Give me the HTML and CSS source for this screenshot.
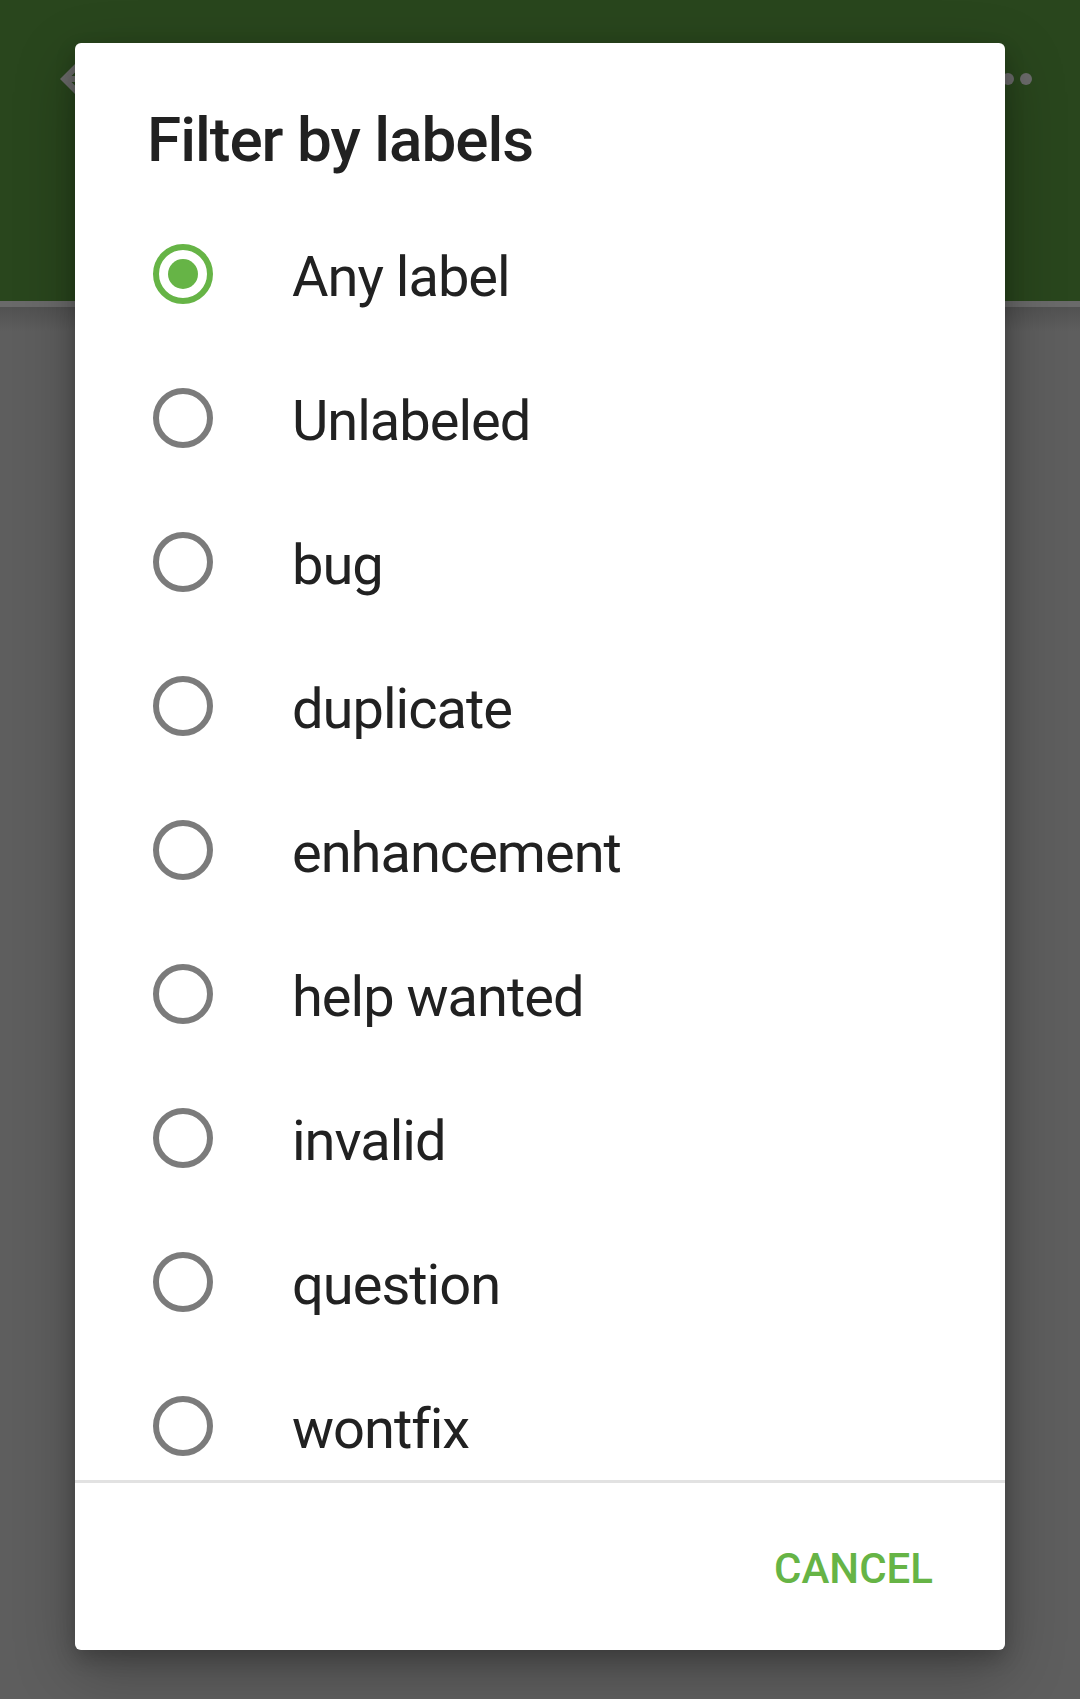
FILE: index.html
```html
<!DOCTYPE html>
<html>
<head>
<meta charset="utf-8">
<link rel="stylesheet" href="styles.css">
</head>
<body>
<div class="screen">
  <header class="appbar">
    <svg class="back" viewBox="0 0 24 24" width="72" height="72"><path d="M20 11H7.83l5.59-5.59L12 4l-8 8 8 8 1.41-1.41L7.83 13H20v-2z" fill="#6b6b6b"/></svg>
    <div class="overflow"><span></span><span></span><span></span></div>
  </header>
  <div class="appbar-edge"></div>
  <div class="content"></div>

  <div class="dialog">
    <h1 class="title">Filter by labels</h1>
    <div class="list">
      <div class="row"><span class="radio checked"></span><span class="label">Any label</span></div>
      <div class="row"><span class="radio"></span><span class="label">Unlabeled</span></div>
      <div class="row"><span class="radio"></span><span class="label">bug</span></div>
      <div class="row"><span class="radio"></span><span class="label">duplicate</span></div>
      <div class="row"><span class="radio"></span><span class="label">enhancement</span></div>
      <div class="row"><span class="radio"></span><span class="label">help wanted</span></div>
      <div class="row"><span class="radio"></span><span class="label">invalid</span></div>
      <div class="row"><span class="radio"></span><span class="label">question</span></div>
      <div class="row"><span class="radio"></span><span class="label">wontfix</span></div>
    </div>
    <div class="divider"></div>
    <div class="actions"><span class="btn">CANCEL</span></div>
  </div>
</div>
</body>
</html>
```
FILE: styles.css
```css
html, body {
  margin: 0;
  padding: 0;
}
body {
  width: 1080px;
  height: 1699px;
  overflow: hidden;
  background: #5e5e5e;
  font-family: Roboto, "Noto Sans", sans-serif;
}
.screen {
  position: relative;
  width: 1080px;
  height: 1699px;
}
.appbar {
  height: 301px;
  background: #29461d;
  position: relative;
}
.back {
  position: absolute;
  left: 48px;
  top: 43px;
}
.overflow {
  position: absolute;
  left: 984px;
  top: 73px;
  display: flex;
  gap: 6px;
}
.overflow span {
  width: 12px;
  height: 12px;
  border-radius: 50%;
  background: #6b6b6b;
}
.appbar-edge {
  height: 6px;
  background: #6a6a6a;
}
.content {
  height: 1392px;
  background: linear-gradient(#525252, #5e5e5e 24px);
}
.dialog {
  position: absolute;
  left: 75px;
  top: 43px;
  width: 930px;
  height: 1607px;
  background: #fff;
  border-radius: 6px;
  box-shadow: 0 20px 60px rgba(0,0,0,0.28), 0 8px 20px rgba(0,0,0,0.2);
  display: flex;
  flex-direction: column;
  overflow: hidden;
}
.title {
  margin: 0;
  padding: 57px 0 0 72px;
  font-size: 62px;
  line-height: 80px;
  font-weight: 500;
  letter-spacing: -1px;
  color: #212121;
}
.list {
  margin-top: 22px;
  height: 1278px;
  overflow: hidden;
}
.row {
  height: 144px;
  display: flex;
  align-items: center;
  padding-left: 78px;
}
.radio {
  width: 60px;
  height: 60px;
  box-sizing: border-box;
  border: 6px solid #7b7b7b;
  border-radius: 50%;
  flex: none;
  display: flex;
  align-items: center;
  justify-content: center;
}
.radio.checked {
  border-color: #66b446;
}
.radio.checked::after {
  content: "";
  width: 30px;
  height: 30px;
  border-radius: 50%;
  background: #66b446;
}
.label {
  margin-left: 79px;
  padding-top: 6px;
  font-size: 56px;
  letter-spacing: -1px;
  color: #212121;
}
.divider {
  height: 3px;
  background: #e2e2e2;
  flex: none;
}
.actions {
  flex: 1;
  display: flex;
  align-items: center;
  justify-content: flex-end;
  padding-right: 72px;
}
.btn {
  padding-top: 3px;
  font-size: 42px;
  font-weight: 500;
  color: #66b446;
}
```
